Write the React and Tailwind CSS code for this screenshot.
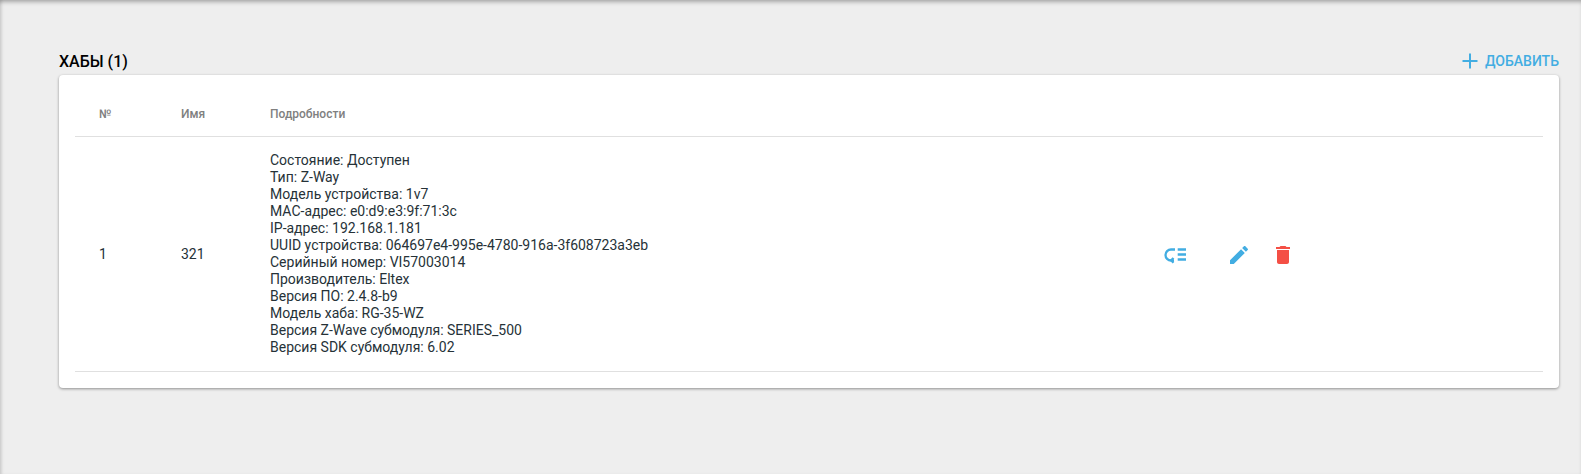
export default function App() {
  const lines = [
    "Состояние: Доступен","Тип: Z-Way","Модель устройства: 1v7","MAC-адрес: e0:d9:e3:9f:71:3c","IP-адрес: 192.168.1.181",
    "UUID устройства: 064697e4-995e-4780-916a-3f608723a3eb","Серийный номер: VI57003014","Производитель: Eltex","Версия ПО: 2.4.8-b9",
    "Модель хаба: RG-35-WZ","Версия Z-Wave субмодуля: SERIES_500","Версия SDK субмодуля: 6.02",
  ];
  return (
    <div className="h-[474px] overflow-hidden bg-[#eeeeee] font-['Roboto',sans-serif] shadow-[inset_0_4px_4px_-2px_rgba(0,0,0,0.3),inset_3px_0_3px_-1px_rgba(0,0,0,0.1)]">
      <div className="pl-[59px] pr-[22px] pt-[50px]">
        <div className="flex h-[25px] justify-between">
          <h2 className="text-[16px] font-medium text-black">ХАБЫ (1)</h2>
          <button className="-mt-[1px] flex h-[24px] items-center gap-[7px] text-[14px] font-medium text-[#42ade2]">
            <svg width="16" height="16" viewBox="0 0 16 16" fill="none" stroke="#42ade2" strokeWidth="2"><path d="M8 .5v15M.5 8h15"/></svg>
            ДОБАВИТЬ
          </button>
        </div>
        <div className="rounded-[4px] bg-white px-4 pb-4 shadow-[0_1px_3px_rgba(0,0,0,0.4)]">
          <div className="flex h-[62px] items-center border-b border-[#e0e0e0] pt-[16px] text-[12px] font-medium text-[#808080]">
            <div className="w-[24px]"></div>
            <div className="w-[82px]">№</div>
            <div className="w-[89px]">Имя</div>
            <div>Подробности</div>
          </div>
          <div className="flex h-[235px] items-center border-b border-[#e0e0e0] text-[14px] text-[#263238]">
            <div className="w-[24px]"></div>
            <div className="w-[82px]">1</div>
            <div className="w-[89px]">321</div>
            <div className="w-[893px] leading-[17px]">
              {lines.map((l) => <div key={l}>{l}</div>)}
            </div>
            <div className="mt-[2px] flex items-center">
              <svg width="24" height="24" viewBox="0 0 24 24" fill="none" stroke="#42ade2" strokeWidth="2.3">
                <path d="M12 6.5H8a5.5 5.5 0 0 0 0 11h3"/>
                <path d="M10.5 15 8.2 17.3l2.3 2.4"/>
                <path d="M14.7 6.5H23M14.7 11.5H23M14.7 16.5H23"/>
              </svg>
              <svg className="ml-[40px]" width="24" height="24" viewBox="0 0 24 24" fill="#42ade2"><path d="M3 17.25V21h3.75L17.81 9.94l-3.75-3.75L3 17.25zM20.71 7.04c.39-.39.39-1.02 0-1.41l-2.34-2.34c-.39-.39-1.02-.39-1.41 0l-1.83 1.83 3.75 3.75 1.83-1.83z"/></svg>
              <svg className="ml-[20px]" width="24" height="24" viewBox="0 0 24 24" fill="#f44f45"><path d="M6 19c0 1.1.9 2 2 2h8c1.1 0 2-.9 2-2V7H6v12zM19 4h-3.5l-1-1h-5l-1 1H5v2h14V4z"/></svg>
            </div>
          </div>
        </div>
      </div>
    </div>
  );
}
